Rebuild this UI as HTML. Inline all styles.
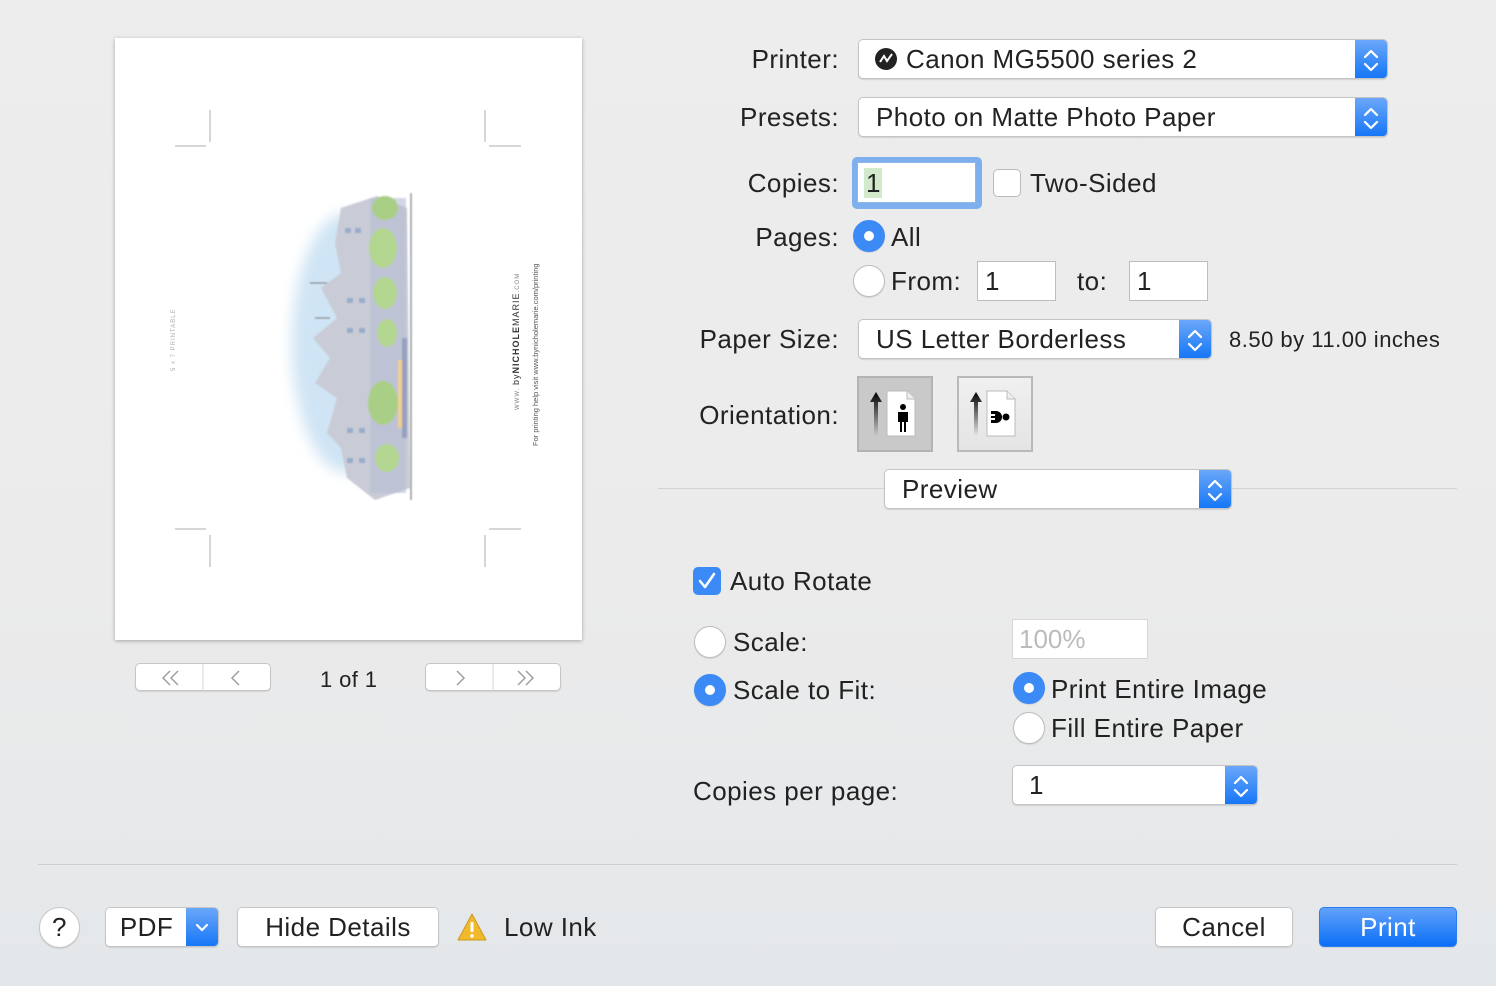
<!DOCTYPE html>
<html><head><meta charset="utf-8"><style>
*{margin:0;padding:0;box-sizing:border-box}
body{width:1496px;height:986px;overflow:hidden;background:linear-gradient(180deg,#ededed 0%,#ebebeb 60%,#e4e7ea 100%);font-family:"Liberation Sans",sans-serif;color:#222;position:relative}
.a{position:absolute;white-space:nowrap}
.t{font-size:26px;line-height:30px;height:30px;letter-spacing:.45px}
.r{text-align:right}
.pop{position:absolute;background:#fff;border:1px solid #c4c4c4;border-radius:5px;box-shadow:0 1px 1px rgba(0,0,0,.12);overflow:hidden}
.pop .st{position:absolute;right:0;top:0;bottom:0;width:32px;background:linear-gradient(#6aa7f9,#1677f7)}
.pop .tx{position:absolute;top:0;bottom:0;display:flex;align-items:center;font-size:26px;letter-spacing:.45px}
.fld{position:absolute;background:#fff;border:1px solid #bdbdbd}
.fld span{font-size:26px}
.rad{position:absolute;border-radius:50%;background:#fff;border:1px solid #bdbdbd;box-shadow:0 1px 1px rgba(0,0,0,.1)}
.rad.on{background:#3b8af6;border-color:#3b8af6}
.rad.on:after{content:"";position:absolute;left:50%;top:50%;width:10px;height:10px;margin:-5px 0 0 -5px;border-radius:50%;background:#fff}
.btn{position:absolute;background:#fff;border:1px solid #c6c6c6;border-radius:5px;box-shadow:0 1px 1px rgba(0,0,0,.1);font-size:26px;letter-spacing:.45px;display:flex;align-items:center;justify-content:center}
</style></head><body>

<div class="a" style="left:115px;top:38px;width:467px;height:602px;background:#fff;box-shadow:0 1px 4px rgba(0,0,0,.3)">
<svg width="467" height="602" style="position:absolute;left:0;top:0">
<g stroke="#d6d6d6" stroke-width="2">
<line x1="95" y1="72" x2="95" y2="104"/><line x1="60" y1="108" x2="91" y2="108"/>
<line x1="370" y1="72" x2="370" y2="104"/><line x1="374" y1="108" x2="406" y2="108"/>
<line x1="95" y1="497" x2="95" y2="529"/><line x1="60" y1="491" x2="91" y2="491"/>
<line x1="370" y1="497" x2="370" y2="529"/><line x1="374" y1="491" x2="406" y2="491"/>
</g>
<defs><filter id="b"><feGaussianBlur stdDeviation="7"/></filter><filter id="b2"><feGaussianBlur stdDeviation="0.8"/></filter></defs>
<ellipse cx="232" cy="305" rx="55" ry="130" fill="#cfe4f4" filter="url(#b)"/>
<g filter="url(#b2)">
<path d="M226 170 L262 158 L292 170 L295 450 L260 462 L232 440 L226 410 L212 395 L222 360 L200 345 L215 320 L198 300 L222 280 L206 250 L226 235 L220 205 Z" fill="#c9ccd6"/>
<g fill="#8ea3c9" opacity=".8">
<rect x="230" y="190" width="6" height="5"/><rect x="240" y="190" width="6" height="5"/><rect x="232" y="260" width="6" height="5"/><rect x="244" y="260" width="6" height="5"/>
<rect x="232" y="290" width="6" height="5"/><rect x="244" y="290" width="6" height="5"/><rect x="232" y="390" width="6" height="5"/><rect x="244" y="390" width="6" height="5"/><rect x="232" y="420" width="6" height="5"/><rect x="244" y="420" width="6" height="5"/>
</g>
<rect x="255" y="160" width="36" height="295" fill="#b6bdd2" opacity=".6"/>
<ellipse cx="270" cy="170" rx="13" ry="12" fill="#a9cf86"/>
<ellipse cx="268" cy="210" rx="14" ry="20" fill="#b2d58f"/>
<ellipse cx="270" cy="255" rx="12" ry="16" fill="#b2d58f"/>
<ellipse cx="272" cy="295" rx="10" ry="14" fill="#b2d58f"/>
<ellipse cx="268" cy="365" rx="15" ry="22" fill="#a9cf86"/>
<ellipse cx="272" cy="420" rx="12" ry="14" fill="#b2d58f"/>
<rect x="283" y="322" width="4" height="68" fill="#f2cf8f"/>
<rect x="287" y="300" width="5" height="100" fill="#97a0c0"/>
<line x1="296" y1="155" x2="296" y2="462" stroke="#888" stroke-width="1.3"/>
<line x1="215" y1="280" x2="200" y2="280" stroke="#777"/><line x1="212" y1="245" x2="195" y2="245" stroke="#777"/>
</g>
<text transform="translate(60,333) rotate(-90)" font-size="6" fill="#aaa" font-family="Liberation Sans" letter-spacing="1">5 x 7 PRINTABLE</text>
<text transform="translate(404,372) rotate(-90)" font-size="9" fill="#333" font-family="Liberation Sans" letter-spacing="1"><tspan font-size="6" fill="#888">WWW. </tspan>by<tspan font-weight="bold">NICHOLE</tspan>MARIE<tspan font-size="6" fill="#888">.COM</tspan></text>
<text transform="translate(423,408) rotate(-90)" font-size="7.5" fill="#555" font-family="Liberation Sans">For printing help visit www.bynicholemarie.com/printing</text>
</svg>
</div>

<div class="btn" style="left:135px;top:663px;width:136px;height:28px">
<svg width="136" height="28" style="position:absolute;left:0;top:0"><line x1="67" y1="0" x2="67" y2="28" stroke="#d4d4d4"/><path d="M34 7 L27 14 L34 21 M42 7 L35 14 L42 21 M103 7 L96 14 L103 21" stroke="#a0a0a0" stroke-width="1.5" fill="none"/></svg></div>
<div class="a" style="left:320px;top:667px;font-size:22px;line-height:26px;letter-spacing:.4px">1 of 1</div>
<div class="btn" style="left:425px;top:663px;width:136px;height:28px">
<svg width="136" height="28" style="position:absolute;left:0;top:0"><line x1="67" y1="0" x2="67" y2="28" stroke="#d4d4d4"/><path d="M31 7 L38 14 L31 21 M92 7 L99 14 L92 21 M100 7 L107 14 L100 21" stroke="#a0a0a0" stroke-width="1.5" fill="none"/></svg></div>

<div class="a t r" style="right:657px;top:44px">Printer:</div>
<div class="a t r" style="right:657px;top:102px">Presets:</div>
<div class="a t r" style="right:657px;top:168px">Copies:</div>
<div class="a t r" style="right:657px;top:222px">Pages:</div>
<div class="a t r" style="right:657px;top:324px">Paper Size:</div>
<div class="a t r" style="right:657px;top:400px">Orientation:</div>

<svg width="0" height="0" style="position:absolute"><defs>
<symbol id="chev" viewBox="0 0 32 40"><path d="M10 17 L16 11 L22 17 M10 24 L16 30 L22 24" stroke="#fff" stroke-width="2.2" fill="none" stroke-linecap="round" stroke-linejoin="round"/></symbol></defs></svg>

<div class="pop" style="left:858px;top:39px;width:530px;height:40px"><div class="tx" style="left:16px">
<svg width="22" height="22" style="margin-right:9px"><circle cx="11" cy="11" r="11" fill="#222"/><path d="M5 14 L9 8 L12 13 L17 6" stroke="#fff" stroke-width="2" fill="none"/></svg>Canon MG5500 series 2</div>
<div class="st"><svg width="32" height="40"><use href="#chev"/></svg></div></div>

<div class="pop" style="left:858px;top:97px;width:530px;height:40px"><div class="tx" style="left:17px">Photo on Matte Photo Paper</div>
<div class="st"><svg width="32" height="40"><use href="#chev"/></svg></div></div>

<div class="a" style="left:852px;top:157px;width:130px;height:52px;border-radius:5px;background:#7fb0ee"></div>
<div class="fld" style="left:857px;top:162px;width:119px;height:41px;border-color:#8fb6e8"><span class="a" style="left:6px;top:5px;line-height:30px;background:#d3e9cc;padding:0 2px">1</span></div>
<div class="a" style="left:993px;top:169px;width:28px;height:28px;border:1px solid #bbb;border-radius:5px;background:#fff"></div>
<div class="a t" style="left:1030px;top:168px">Two-Sided</div>

<div class="rad on" style="left:853px;top:220px;width:32px;height:32px"></div>
<div class="a t" style="left:891px;top:222px">All</div>
<div class="rad" style="left:853px;top:265px;width:32px;height:32px"></div>
<div class="a t" style="left:891px;top:266px">From:</div>
<div class="fld" style="left:977px;top:261px;width:79px;height:40px"><span class="a" style="left:7px;top:4px;line-height:30px">1</span></div>
<div class="a t" style="left:1077px;top:266px">to:</div>
<div class="fld" style="left:1129px;top:261px;width:79px;height:40px"><span class="a" style="left:7px;top:4px;line-height:30px">1</span></div>

<div class="pop" style="left:858px;top:319px;width:354px;height:40px"><div class="tx" style="left:17px">US Letter Borderless</div>
<div class="st"><svg width="32" height="40"><use href="#chev"/></svg></div></div>
<div class="a" style="left:1229px;top:327px;font-size:22px;line-height:26px;letter-spacing:.5px">8.50 by 11.00 inches</div>

<div class="a" style="left:857px;top:376px;width:76px;height:76px;background:#c9c9c9;border:2px solid #b3b3b3"></div>
<div class="a" style="left:957px;top:376px;width:76px;height:76px;background:linear-gradient(#f0f0f0,#e4e4e4);border:2px solid #b9b9b9"></div>
<svg class="a" style="left:857px;top:376px" width="180" height="76">
<defs><linearGradient id="ar" x1="0" y1="0" x2="0" y2="1"><stop offset="0" stop-color="#000"/><stop offset="1" stop-color="#000" stop-opacity="0"/></linearGradient></defs>
<path d="M19 16 L25 26 L21 26 L21 60 L17 60 L17 26 L13 26 Z" fill="url(#ar)"/>
<path d="M30 15 L50 15 L58 23 L58 60 L30 60 Z" fill="#fff" stroke="#bbb"/><path d="M50 15 L50 23 L58 23" fill="#eee" stroke="#bbb"/>
<circle cx="46" cy="31" r="3" fill="#000"/><path d="M41 36 H51 V46 H49 V56 H47 V46 H45 V56 H43 V46 H41 Z" fill="#000"/>
<path d="M119 16 L125 26 L121 26 L121 60 L117 60 L117 26 L113 26 Z" fill="url(#ar)"/>
<path d="M130 15 L150 15 L158 23 L158 60 L130 60 Z" fill="#fff" stroke="#bbb"/><path d="M150 15 L150 23 L158 23" fill="#eee" stroke="#bbb"/>
<path d="M134 35 H139 A5 5 0 0 1 139 47 H134 V44 H138 V42 H134 V40 H138 V38 H134 Z" fill="#000"/><circle cx="149" cy="41" r="3.5" fill="#000"/>
</svg>

<div class="a" style="left:658px;top:488px;width:799px;height:1px;background:#d3d3d3"></div>
<div class="pop" style="left:884px;top:469px;width:348px;height:40px"><div class="tx" style="left:17px">Preview</div>
<div class="st"><svg width="32" height="40"><use href="#chev"/></svg></div></div>

<div class="a" style="left:693px;top:567px;width:28px;height:28px;border-radius:5px;background:#3b8af6"><svg width="28" height="28"><path d="M7 14 L12 20 L21 7" stroke="#fff" stroke-width="2.5" fill="none" stroke-linecap="round" stroke-linejoin="round"/></svg></div>
<div class="a t" style="left:730px;top:566px">Auto Rotate</div>
<div class="rad" style="left:694px;top:626px;width:32px;height:32px"></div>
<div class="a t" style="left:733px;top:627px">Scale:</div>
<div class="fld" style="left:1012px;top:619px;width:136px;height:40px;border-color:#d6d6d6"><span class="a" style="left:6px;top:4px;line-height:30px;color:#bbb">100%</span></div>
<div class="rad on" style="left:694px;top:674px;width:32px;height:32px"></div>
<div class="a t" style="left:733px;top:675px">Scale to Fit:</div>
<div class="rad on" style="left:1013px;top:672px;width:32px;height:32px"></div>
<div class="a t" style="left:1051px;top:674px">Print Entire Image</div>
<div class="rad" style="left:1013px;top:712px;width:32px;height:32px"></div>
<div class="a t" style="left:1051px;top:713px">Fill Entire Paper</div>
<div class="a t" style="left:693px;top:776px">Copies per page:</div>
<div class="pop" style="left:1012px;top:765px;width:246px;height:40px"><div class="tx" style="left:16px">1</div>
<div class="st"><svg width="32" height="40"><use href="#chev"/></svg></div></div>

<div class="a" style="left:38px;top:864px;width:1419px;height:1px;background:#cfcfcf"></div>
<div class="btn" style="left:39px;top:907px;width:41px;height:41px;border-radius:50%">?</div>
<div class="btn" style="left:105px;top:907px;width:114px;height:40px;justify-content:flex-start;overflow:hidden">
<span style="width:81px;text-align:center">PDF</span>
<span style="position:absolute;right:0;top:0;bottom:0;width:32px;background:linear-gradient(#6aa7f9,#1677f7)"><svg width="32" height="40"><path d="M11 17 L16 22 L21 17" stroke="#fff" stroke-width="2.2" fill="none" stroke-linecap="round"/></svg></span></div>
<div class="btn" style="left:237px;top:907px;width:202px;height:40px">Hide Details</div>
<svg class="a" style="left:456px;top:912px" width="32" height="30"><path d="M16 2 L30 28 L2 28 Z" fill="#f1b92b" stroke="#c99a1e" stroke-linejoin="round"/><rect x="14.5" y="10" width="3" height="10" rx="1" fill="#fff"/><circle cx="16" cy="24" r="1.8" fill="#fff"/></svg>
<div class="a t" style="left:504px;top:912px">Low Ink</div>
<div class="btn" style="left:1155px;top:907px;width:138px;height:40px">Cancel</div>
<div class="btn" style="left:1319px;top:907px;width:138px;height:40px;background:linear-gradient(#62a2fa,#0a6ff6);border-color:#2a7cf0;color:#fff">Print</div>
</body></html>
